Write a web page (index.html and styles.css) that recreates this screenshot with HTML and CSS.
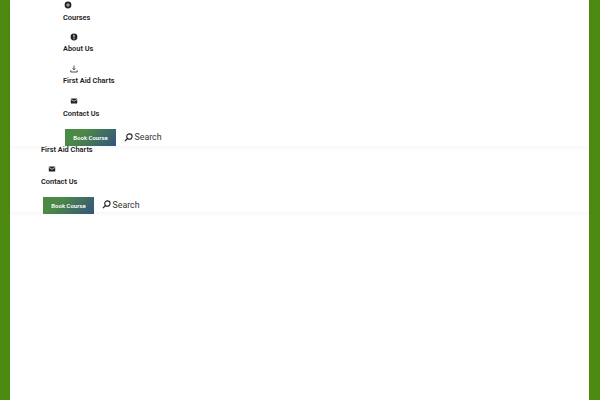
FILE: index.html
```html
<!DOCTYPE html>
<html lang="en">
<head>
<meta charset="utf-8">
<title>First Aid</title>
<link rel="stylesheet" href="styles.css">
</head>
<body>
<div class="frame">
  <header class="nav nav-top">
    <ul class="menu">
      <li class="item item-first">
        <svg class="icon icon-left" viewBox="0 0 8 8"><circle cx="4" cy="4" r="3.400" fill="#222"/><circle cx="4" cy="4" r="1.700" fill="#999"/></svg>
        <span>Courses</span>
      </li>
      <li class="item">
        <svg class="icon" viewBox="0 0 8 8"><circle cx="4" cy="4" r="3.400" fill="#222"/><rect x="3.500" y="1.700" width="1" height="2.800" fill="#fff"/><rect x="3.500" y="5.200" width="1" height="1" fill="#fff"/></svg>
        <span>About Us</span>
      </li>
      <li class="item">
        <svg class="icon" viewBox="0 0 8 8"><path d="M4 .6V4.600M2.600 3.400 4 4.800 5.400 3.400M.8 5.400V7H7.200V5.400" fill="none" stroke="#222" stroke-width=".8"/></svg>
        <span>First Aid Charts</span>
      </li>
      <li class="item">
        <svg class="icon" viewBox="0 0 8 8"><rect x=".8" y="1.400" width="6.400" height="5.200" rx=".6" fill="#222"/><path d="M1 2.400 4 4.300 7 2.400" fill="none" stroke="#fff" stroke-width=".7"/></svg>
        <span>Contact Us</span>
      </li>
    </ul>
    <div class="actions">
      <a class="book">Book Course</a>
      <span class="search">
        <svg class="search-icon" viewBox="0 0 10 10"><circle cx="6" cy="4" r="3" fill="none" stroke="#222" stroke-width="1.200"/><path d="M3.900 6.100 1 9" stroke="#222" stroke-width="1.300"/></svg>
        Search
      </span>
    </div>
  </header>
  <header class="nav nav-second">
    <ul class="menu">
      <li class="item item-cut"><span>First Aid Charts</span></li>
      <li class="item">
        <svg class="icon" viewBox="0 0 8 8"><rect x=".8" y="1.400" width="6.400" height="5.200" rx=".6" fill="#222"/><path d="M1 2.400 4 4.300 7 2.400" fill="none" stroke="#fff" stroke-width=".7"/></svg>
        <span>Contact Us</span>
      </li>
    </ul>
    <div class="actions">
      <a class="book">Book Course</a>
      <span class="search">
        <svg class="search-icon" viewBox="0 0 10 10"><circle cx="6" cy="4" r="3" fill="none" stroke="#222" stroke-width="1.200"/><path d="M3.900 6.100 1 9" stroke="#222" stroke-width="1.300"/></svg>
        Search
      </span>
    </div>
  </header>
</div>
</body>
</html>
```

FILE: styles.css
```css
* { box-sizing: border-box; }
html, body { margin: 0; height: 100%; }
body { font-family: Roboto, "Liberation Sans", sans-serif; color: #222; background: #fff; overflow: hidden; }
.frame { height: 400px; border-left: 10px solid #4d8a12; border-right: 11px solid #4d8a12; background: #fff; }
.nav { box-shadow: 0 2px 4px rgba(0,0,0,.04); }
.nav-top { height: 146px; padding-left: 53px; }
.nav-second { height: 68px; padding-left: 31px; }
.menu { list-style: none; margin: 0; padding: 0; }
.item { display: flex; flex-direction: column; align-items: flex-start; height: 32.400px; padding-top: 6px; font-size: 7.400px; font-weight: 600; line-height: 11px; }
.item-first { height: 26.500px; padding-top: 1px; }
.item-cut { height: 15.500px; padding-top: 0; margin-top: -2.500px; }
.icon { flex: none; display: block; width: 8px; height: 8px; margin: 0 0 2.600px 7px; }
.icon-left { margin-left: 1px; }
.actions { display: flex; align-items: flex-start; gap: 8px; height: 18px; margin: 5.500px 0 0 2px; }
.book { display: flex; align-items: center; justify-content: center; width: 51px; height: 17px; font-size: 6px; font-weight: 600; color: #fff; background: linear-gradient(135deg, #4a8a45 30%, #36527f 100%); }
.search { display: flex; align-items: center; gap: 1.500px; height: 16px; font-size: 8.800px; color: #333; }
.search-icon { width: 9px; height: 9px; }
```
